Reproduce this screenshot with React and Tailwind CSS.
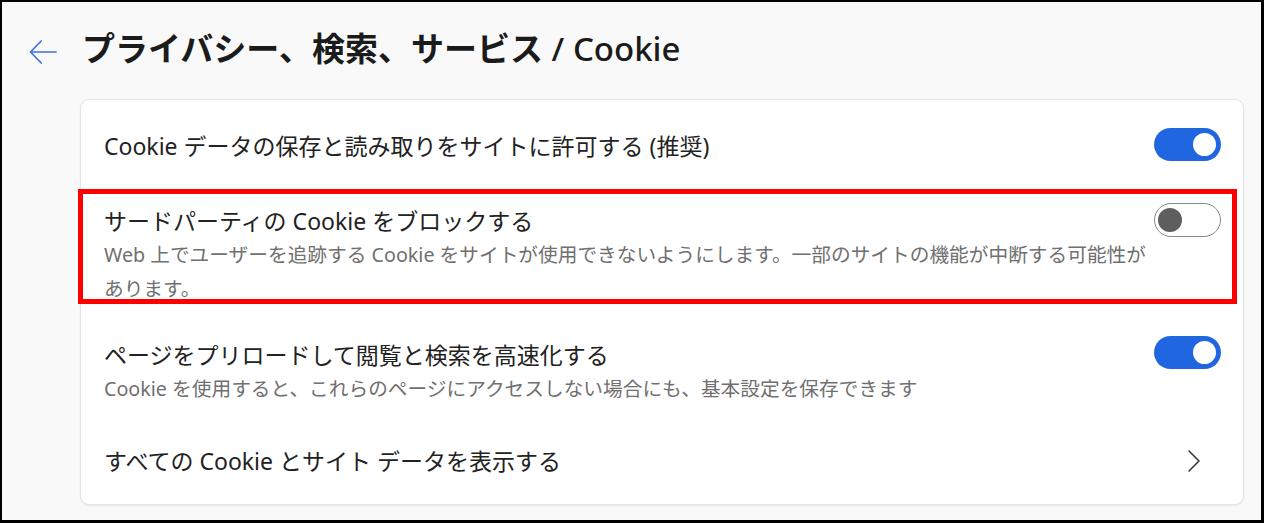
export default function App() {
  const ToggleOn = ({ cls = "" }) => (
    <div className={"w-[67px] h-[33px] rounded-full bg-[#1f66e0] flex items-center justify-end pr-[5px] shrink-0 " + cls}>
      <div className="w-[23px] h-[23px] rounded-full bg-white" />
    </div>
  );
  const ToggleOff = ({ cls = "" }) => (
    <div className={"w-[67px] h-[34px] rounded-full border border-[#8a8a8a] bg-white flex items-center pl-[3px] shrink-0 " + cls}>
      <div className="w-[24px] h-[24px] rounded-full bg-[#5e5e5e]" />
    </div>
  );
  return (
    <div className="w-[1264px] h-[523px] overflow-hidden bg-[#f9f9f9] border-black border-t-2 border-l-2 border-r-[3px] border-b-[3px] font-['Noto_Sans','Noto_Sans_CJK_JP',sans-serif]">
      <div className="mt-[27px] ml-[27px] flex items-start h-[40px]">
        <svg className="mt-[11px] shrink-0" width="28" height="24" viewBox="0 0 28 24" fill="none">
          <path d="M27 12 H1.8 M12.2 1 L1.5 12 L12.2 23" stroke="#3d72d9" strokeWidth="1.7" strokeLinecap="round" strokeLinejoin="round" />
        </svg>
        <h1 className="ml-[25px] text-[33px] leading-[40px] text-[#1b1b1b] whitespace-nowrap">
          <span className="font-bold">プライバシー、検索、サービス</span>
          <span className="font-medium"> / Cookie</span>
        </h1>
      </div>
      <div className="relative mt-[30px] ml-[78px] w-[1164px] h-[406px] rounded-[9px] border border-[#e4e4e4] bg-white shadow-[0_1px_2px_rgba(0,0,0,0.07)] pl-[23px] pr-[22px]">
        {/* Row 1 */}
        <div className="h-[91px] flex items-center justify-between">
          <div className="text-[23px] leading-[34px] text-[#222] whitespace-nowrap">Cookie データの保存と読み取りをサイトに許可する (推奨)</div>
          <ToggleOn cls="mb-[3px]" />
        </div>
        {/* Row 2 */}
        <div className="pt-[13px] pb-[16px] flex items-start justify-between">
          <div className="flex-1 min-w-0">
            <div className="text-[23px] leading-[34px] text-[#222] whitespace-nowrap">サードパーティの Cookie をブロックする</div>
            <div className="text-[19.7px] leading-[34px] text-[#707070] whitespace-nowrap">
              Web 上でユーザーを追跡する Cookie をサイトが使用できないようにします。一部のサイトの機能が中断する可能性が
              <br />
              あります。
            </div>
          </div>
          <ToggleOff cls="-mt-[1px]" />
        </div>
        {/* Row 3 */}
        <div className="pt-[16px] pb-[13px] flex items-start justify-between">
          <div className="flex-1 min-w-0">
            <div className="text-[23px] leading-[34px] text-[#222] whitespace-nowrap">ページをプリロードして閲覧と検索を高速化する</div>
            <div className="text-[19.7px] leading-[34px] text-[#707070] whitespace-nowrap">Cookie を使用すると、これらのページにアクセスしない場合にも、基本設定を保存できます</div>
          </div>
          <ToggleOn cls="-mt-[2px]" />
        </div>
        {/* Row 4 */}
        <div className="h-[84px] flex items-center justify-between">
          <div className="text-[23px] leading-[34px] text-[#222] whitespace-nowrap">すべての Cookie とサイト データを表示する</div>
          <svg className="mr-[20px] shrink-0" width="14" height="22" viewBox="0 0 14 22" fill="none">
            <path d="M2 1 L12 11 L2 21" stroke="#333" strokeWidth="1.5" strokeLinecap="round" strokeLinejoin="round" />
          </svg>
        </div>
        {/* Annotation */}
        <div className="absolute left-[-3px] top-[89px] w-[1159px] h-[115px] border-[5px] border-[#ff0000] pointer-events-none" />
      </div>
    </div>
  );
}
